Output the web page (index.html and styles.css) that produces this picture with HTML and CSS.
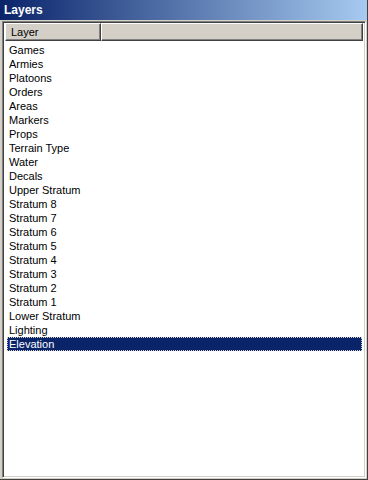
FILE: index.html
```html
<!DOCTYPE html>
<html>
<head>
<meta charset="utf-8">
<link rel="stylesheet" href="styles.css">
</head>
<body>
<div class="window">
  <div class="title">Layers</div>
  <div class="list">
    <div class="header">
      <div class="col first">Layer</div>
      <div class="col rest"></div>
    </div>
    <div class="rows">
      <div class="row">Games</div>
      <div class="row">Armies</div>
      <div class="row">Platoons</div>
      <div class="row">Orders</div>
      <div class="row">Areas</div>
      <div class="row">Markers</div>
      <div class="row">Props</div>
      <div class="row">Terrain Type</div>
      <div class="row">Water</div>
      <div class="row">Decals</div>
      <div class="row">Upper Stratum</div>
      <div class="row">Stratum 8</div>
      <div class="row">Stratum 7</div>
      <div class="row">Stratum 6</div>
      <div class="row">Stratum 5</div>
      <div class="row">Stratum 4</div>
      <div class="row">Stratum 3</div>
      <div class="row">Stratum 2</div>
      <div class="row">Stratum 1</div>
      <div class="row">Lower Stratum</div>
      <div class="row">Lighting</div>
      <div class="row selected">Elevation</div>
    </div>
  </div>
</div>
</body>
</html>
```
FILE: styles.css
```css
html, body {
  margin: 0;
  padding: 0;
  background: #d4d0c8;
}
.window {
  width: 368px;
  height: 480px;
  box-sizing: border-box;
  display: flex;
  flex-direction: column;
  background: #d4d0c8;
  border-right: 1px solid #404040;
  border-bottom: 1px solid #404040;
  font-family: "Liberation Sans", Arial, sans-serif;
  font-size: 11px;
}
.title {
  height: 20px;
  flex: none;
  background: linear-gradient(to right, #0a246a, #a6caf0);
  color: #fff;
  font-weight: bold;
  font-size: 12px;
  line-height: 20px;
  padding-left: 4px;
}
.list {
  flex: 1;
  margin: 1px 1px 1px 2px;
  border-top: 1px solid #808080;
  border-left: 1px solid #808080;
  border-right: 1px solid #fff;
  border-bottom: 1px solid #fff;
  box-shadow: inset 1px 1px 0 #404040, inset -1px -1px 0 #d4d0c8;
  background: #fff;
  padding: 1px 2px 2px 2px;
  display: flex;
  flex-direction: column;
}
.header {
  display: flex;
  height: 18px;
  flex: none;
}
.col {
  box-sizing: border-box;
  background: #d4d0c8;
  border-top: 1px solid #fff;
  border-left: 1px solid #fff;
  border-right: 1px solid #404040;
  border-bottom: 1px solid #404040;
  box-shadow: inset -1px -1px 0 #808080;
  color: #000;
  line-height: 16px;
  padding-left: 5px;
}
.first {
  width: 96px;
}
.rest {
  flex: 1;
}
.rows {
  padding: 2px 0 0 2px;
  margin-right: 1px;
}
.row {
  height: 14px;
  line-height: 14px;
  padding-left: 2px;
  color: #000;
  box-sizing: border-box;
}
.selected {
  background: #0a246a;
  color: #fff;
  outline: 1px dotted #d4d0c8;
  outline-offset: -1px;
}
```
